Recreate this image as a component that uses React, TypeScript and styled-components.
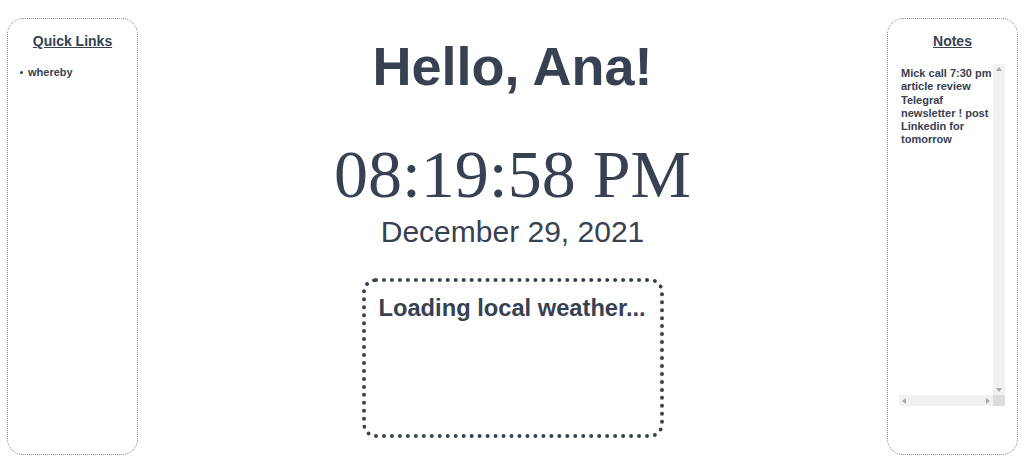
import React from "react";
import styled, { createGlobalStyle } from "styled-components";

const Global = createGlobalStyle`
  html, body { margin: 0; padding: 0; background: #ffffff; }
  body { font-family: "Liberation Sans", Arial, sans-serif; color: #374151; }
`;

const Page = styled.div`
  display: flex;
  justify-content: space-between;
  align-items: flex-start;
  padding: 18px 6px 0 7px;
  height: 475px;
  box-sizing: border-box;
`;

const Panel = styled.aside`
  width: 131px;
  height: 437px;
  box-sizing: border-box;
  border: 1px dotted #8a8a8a;
  border-radius: 16px;
  padding: 14px 0 0;
  display: flex;
  flex-direction: column;
  align-items: stretch;
`;

const PanelTitle = styled.h2`
  margin: 0;
  font-size: 14px;
  font-weight: 700;
  text-align: center;
  text-decoration: underline;
  line-height: 16px;
`;

const LinkList = styled.ul`
  margin: 17px 0 0;
  padding: 0 0 0 12px;
  list-style: none;
  font-size: 11px;
  font-weight: 700;
  line-height: 13px;
`;

const LinkItem = styled.li`
  color: #374151;
  display: flex;
  align-items: center;
  gap: 5px;
  &::before {
    content: "";
    width: 3px;
    height: 3px;
    border-radius: 50%;
    background: #374151;
  }
`;

const NotesBox = styled.div`
  margin: 15px 12px 0 11px;
  display: grid;
  grid-template-columns: 94px 12px;
  grid-template-rows: 331px 11px;
`;

const NotesArea = styled.textarea`
  width: 100%;
  height: 100%;
  box-sizing: border-box;
  border: none;
  outline: none;
  resize: none;
  padding: 3px 0 0 2px;
  margin: 0;
  font-family: "Liberation Sans", Arial, sans-serif;
  font-size: 11px;
  font-weight: 700;
  line-height: 13.3px;
  color: #374151;
  background: #fff;
  overflow: hidden;
  white-space: pre-wrap;
`;

const Track = styled.div<{ $vertical?: boolean }>`
  background: #f1f1f1;
  display: flex;
  flex-direction: ${(p) => (p.$vertical ? "column" : "row")};
  justify-content: space-between;
  align-items: center;
  padding: ${(p) => (p.$vertical ? "3px 0" : "0 3px")};
  box-sizing: border-box;
`;

const Corner = styled.div`
  background: #dcdcdc;
`;

const Arrow = ({ dir }: { dir: "up" | "down" | "left" | "right" }) => {
  const pts = {
    up: "0,4 3,0 6,4",
    down: "0,0 3,4 6,0",
    left: "4,0 0,3 4,6",
    right: "0,0 4,3 0,6",
  }[dir];
  const vertical = dir === "up" || dir === "down";
  return (
    <svg width={vertical ? 6 : 4} height={vertical ? 4 : 6} viewBox={vertical ? "0 0 6 4" : "0 0 4 6"}>
      <polygon points={pts} fill="#a8a8a8" />
    </svg>
  );
};

const Center = styled.main`
  flex: 1;
  display: flex;
  flex-direction: column;
  align-items: center;
`;

const Greeting = styled.h1`
  margin: 17px 0 0;
  font-size: 54px;
  font-weight: 700;
  line-height: 62px;
`;

const Clock = styled.div`
  margin-top: 38px;
  font-family: "Liberation Serif", "Times New Roman", serif;
  font-size: 68px;
  line-height: 78px;
`;

const DateLine = styled.div`
  margin-top: 1px;
  font-size: 30px;
  line-height: 35px;
`;

const WeatherBox = styled.section`
  margin-top: 29px;
  width: 302px;
  height: 160px;
  box-sizing: border-box;
  border: 4px dotted #374151;
  border-radius: 14px;
  padding: 12px 6px 12px 13px;
`;

const WeatherText = styled.h3`
  margin: 0;
  font-size: 23.7px;
  font-weight: 700;
  line-height: 28px;
  white-space: nowrap;
`;

export default function App() {
  return (
    <>
      <Global />
      <Page>
        <Panel>
          <PanelTitle>Quick Links</PanelTitle>
          <LinkList>
            <LinkItem>whereby</LinkItem>
          </LinkList>
        </Panel>
        <Center>
          <Greeting>Hello, Ana!</Greeting>
          <Clock>08:19:58 PM</Clock>
          <DateLine>December 29, 2021</DateLine>
          <WeatherBox>
            <WeatherText>Loading local weather...</WeatherText>
          </WeatherBox>
        </Center>
        <Panel>
          <PanelTitle>Notes</PanelTitle>
          <NotesBox>
            <NotesArea
              defaultValue={"Mick call 7:30 pm article review Telegraf newsletter ! post Linkedin for tomorrow"}
            />
            <Track $vertical>
              <Arrow dir="up" />
              <Arrow dir="down" />
            </Track>
            <Track>
              <Arrow dir="left" />
              <Arrow dir="right" />
            </Track>
            <Corner />
          </NotesBox>
        </Panel>
      </Page>
    </>
  );
}
